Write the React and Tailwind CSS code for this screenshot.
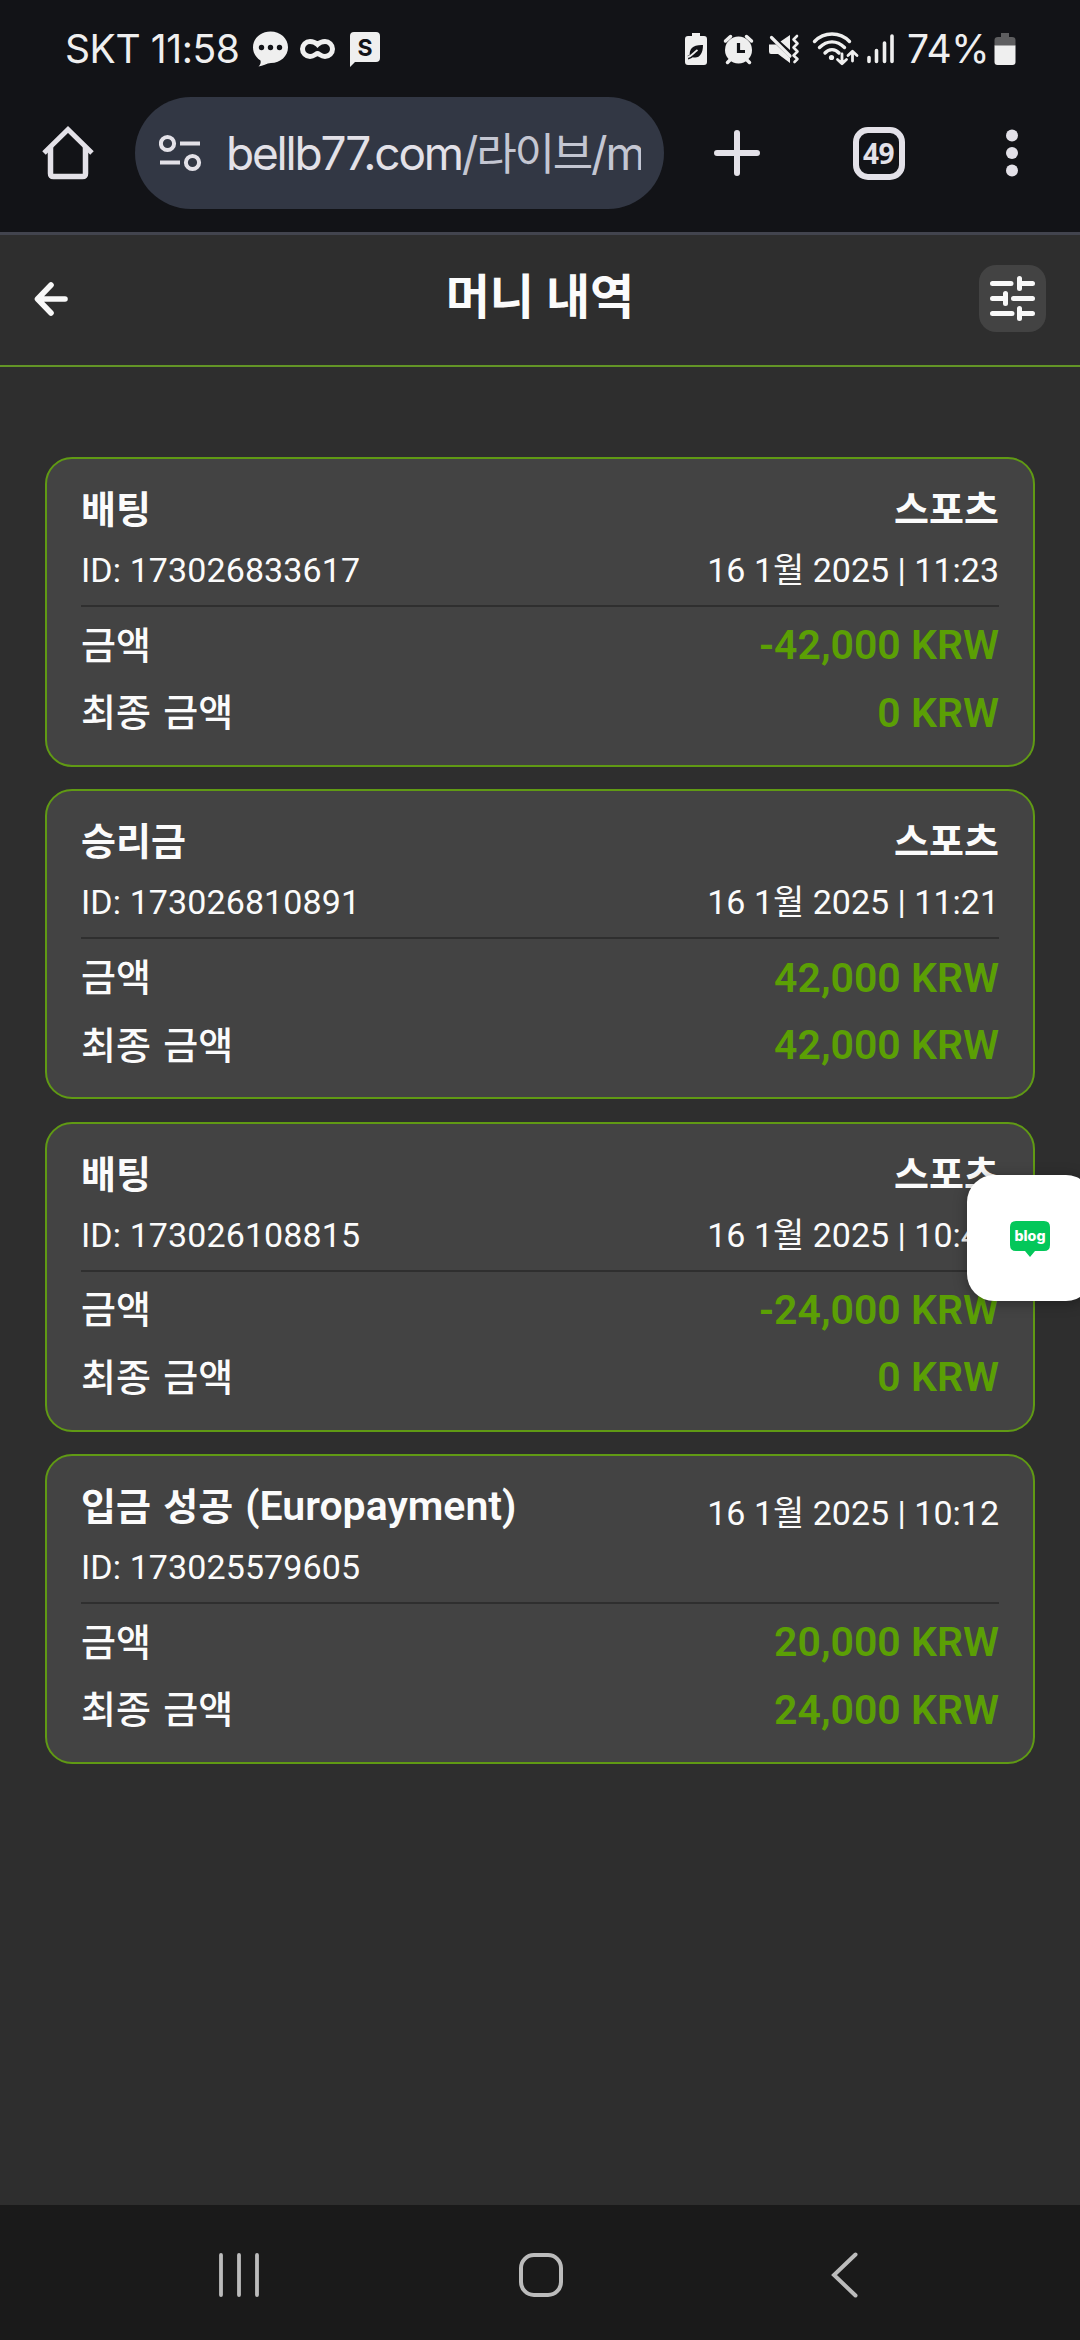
import React from "react";

const transactions = [
  { title: "배팅", category: "스포츠", id: "173026833617", time: "11:23", amount: "-42,000", total: "0" },
  { title: "승리금", category: "스포츠", id: "173026810891", time: "11:21", amount: "42,000", total: "42,000" },
  { title: "배팅", category: "스포츠", id: "173026108815", time: "10:43", amount: "-24,000", total: "0" },
  { title: "입금 성공", provider: "(Europayment)", id: "173025579605", time: "10:12", amount: "20,000", total: "24,000" },
];

const StatusBar = () => (
  <div className="flex h-[97px] items-center justify-between pt-[1px] pl-[65px] pr-[64px] text-[#efefef]">
    <div className="flex items-center">
      <span className="w-[188px] whitespace-nowrap text-[39px] leading-[44px] tracking-[-0.4px]">SKT 11:58</span>
      <svg width="128" height="36" viewBox="0 0 128 36" fill="#efefef">
        <path d="M17.500 0.500C27.500 0.500 35 7.500 35 16.200S27.500 32 18 32C13.500 32.200 10 35 5.500 35.500C7.500 33.500 8 31.500 7.500 29.500C3 26.500 0 22 0 16.200C0 7.500 7.500 0.500 17.500 0.500Z" />
        <circle cx="8.500" cy="16.500" r="2.700" fill="#121317" />
        <circle cx="17.500" cy="16.500" r="2.700" fill="#121317" />
        <circle cx="26.500" cy="16.500" r="2.700" fill="#121317" />
        <path d="M64.500 13.500C62 11.200 59.500 10.500 57 10.500a7.500 7.500 0 0 0 0 15C61 25.500 63 22.500 64.500 22.500S68 25.500 72 25.500a7.500 7.500 0 0 0 0-15C69.500 10.500 67 11.200 64.500 13.500Z" fill="none" stroke="#efefef" strokeWidth="5" />
        <path d="M101 1H123a4 4 0 0 1 4 4V27a4 4 0 0 1-4 4H102L97 36V5a4 4 0 0 1 4-4Z" />
        <text x="112" y="24.500" textAnchor="middle" fontSize="23" fontWeight="700" fontFamily="Inter, sans-serif" fill="#121317">S</text>
      </svg>
    </div>
    <div className="flex items-center">
      <svg width="210" height="36" viewBox="685 31 210 36" fill="none" stroke="#efefef">
        {/* battery saver */}
        <path d="M692 33H700V36H704Q707 36 707 39V62Q707 65 704 65H688Q685 65 685 62V39Q685 36 688 36H692Z" fill="#efefef" stroke="none" />
        <path d="M690 56.500C688.500 49 693 44.500 703 45C703 54 699 59.500 692 57Z" fill="#121317" stroke="none" />
        <path d="M688 57.500C692 57 693.500 53 698 50.500" stroke="#121317" strokeWidth="4" />
        <path d="M688 57C692 56 693.500 52.500 697.500 50" strokeWidth="2" />
        {/* alarm */}
        <circle cx="738.500" cy="50" r="13.500" fill="#efefef" stroke="none" />
        <path d="M725.500 41L730.500 36.500M751.500 41L746.500 36.500M727.500 62.500L731 59M749.500 62.500L746 59" strokeWidth="3.500" strokeLinecap="round" />
        <path d="M738.500 43V51.500H745" stroke="#121317" strokeWidth="3.200" />
        {/* muted speaker */}
        <path d="M769 44.500H776L790 58V63L778 54H771Q769 54 769 51.500ZM790 35V50L780.500 41.500Z" fill="#efefef" stroke="none" />
        <path d="M771.500 37.500L790 56" strokeWidth="3.200" strokeLinecap="round" />
        <path d="M797 36L793.500 39.500L797.500 43.500L793.500 47.500L797.500 51.500L793.500 55.500L797.500 59L794.500 62" strokeWidth="2.600" strokeLinecap="round" strokeLinejoin="round" />
        {/* wifi */}
        <path d="M814.500 41.500C824 31.500 840 31.500 849.500 41.500M819.500 47.500C827 40 837 40 844.500 47.500M825 53C829 48.500 835 48.500 839 53" strokeWidth="3.400" strokeLinecap="round" />
        <circle cx="831.500" cy="57.500" r="2.600" fill="#efefef" stroke="none" />
        <path d="M842 54V63.500M837.500 59.500L842 63.800L846.500 59.500M852.500 61V51.500M848 55.500L852.500 51.200L857 55.500" strokeWidth="2.800" strokeLinecap="round" strokeLinejoin="round" />
        {/* signal */}
        <path d="M869 57.500V61.500M876.500 50.500V61.500M884.500 43V61.500M892 36V61.500" strokeWidth="3.600" strokeLinecap="round" />
      </svg>
      <span className="ml-[12px] w-[87px] whitespace-nowrap text-[39px] leading-[44px] tracking-[-0.4px]">74%</span>
      <svg width="22" height="36" viewBox="0 0 22 36">
        <path d="M7 2H15V6H18Q21.500 6 21.500 9V15H0.500V9Q0.500 6 4 6H7Z" fill="#5e5e60" />
        <path d="M0.500 14.500H21.500V31Q21.500 34 18.500 34H3.500Q0.500 34 0.500 31Z" fill="#efefef" />
      </svg>
    </div>
  </div>
);

const BrowserBar = () => (
  <div className="flex h-[138px] items-start border-b-[3px] border-[#42444e]">
    <div className="flex h-28 w-[135px] items-center pl-[42px]">
      <svg width="52" height="54" viewBox="0 0 52 54" fill="none" stroke="#e3e1e8" strokeWidth="5.500">
        <path d="M2 27L26 3.500L50 27" strokeWidth="5" />
        <path d="M8.500 21V47.500Q8.500 50.500 11.500 50.500H40.500Q43.500 50.500 43.500 47.500V21" />
      </svg>
    </div>
    <div className="flex h-28 w-[529px] items-center rounded-full bg-[#323744] pl-6">
      <svg width="43" height="38" viewBox="0 0 43 38" fill="none" stroke="#e3e1e8" strokeWidth="4">
        <circle cx="8.500" cy="9.500" r="6.600" />
        <path d="M21 9.500H41M1 28.500H21" />
        <circle cx="33.500" cy="28.500" r="6.600" />
      </svg>
      <div className="ml-6 flex w-[415px] overflow-hidden whitespace-nowrap text-[46px] leading-[64px] tracking-[-2.200px]">
        <span className="text-[#e3e1e8]">bellb77.com</span>
        <span className="text-[#c4c6d2]">
          /<span className="text-[44px]">라이브</span>/m
        </span>
      </div>
    </div>
    <div className="flex h-28 flex-1 items-center justify-between pl-[50px] pr-[62px]">
      <svg width="46" height="46" viewBox="0 0 46 46" stroke="#e3e1e8" strokeWidth="6" strokeLinecap="round">
        <path d="M23 3V43M3 23H43" />
      </svg>
      <div className="mr-[9px] flex h-[53px] w-[52px] items-center justify-center rounded-[15px] border-[6px] border-[#e3e1e8] text-[28px] font-bold leading-none tracking-[-0.5px] text-[#e3e1e8]" style={{ fontFamily: "'Noto Sans', sans-serif" }}>
        49
      </div>
      <svg width="12" height="48" viewBox="0 0 12 48" fill="#e3e1e8">
        <circle cx="6" cy="6.500" r="6" />
        <circle cx="6" cy="24" r="6" />
        <circle cx="6" cy="41.500" r="6" />
      </svg>
    </div>
  </div>
);

const PageHeader = () => (
  <div className="flex h-[132px] items-center justify-between border-b-2 border-[#639526] pb-[3px] pl-[34px] pr-[34px]">
    <div className="w-[67px]">
      <svg width="34" height="34" viewBox="0 0 34 34" fill="none" stroke="#f8f8f8" strokeWidth="5.600" strokeLinecap="round" strokeLinejoin="round">
        <path d="M31 17H4M17 3L3.500 17L17 31" />
      </svg>
    </div>
    <h1 className="pb-[1px] text-[48px] font-bold leading-[60px] text-[#fbfbfb]">머니 내역</h1>
    <div className="flex h-[67px] w-[67px] items-center justify-center rounded-[17px] bg-[#434343]">
      <svg width="45" height="45" viewBox="0 0 45 45" fill="none" stroke="#f8f8f8" strokeWidth="5" strokeLinecap="round">
        <path d="M2.500 7.500H21M29.500 2.500V12.500M30 7.500H42.500M2.500 22.500H15M15.500 17.500V27.500M23.500 22.500H42.500M2.500 37.500H22M29.500 32.500V42.500M30 37.500H42.500" />
      </svg>
    </div>
  </div>
);

const AmountRow = ({ label, value }) => (
  <div className="flex h-[67.500px] items-center justify-between">
    <span className="text-[38px] font-medium leading-none text-[#fbfbfb] [word-spacing:3px]">{label}</span>
    <span className="text-[41px] font-semibold leading-none text-[#5b9f05]">{value} KRW</span>
  </div>
);

const TransactionCard = ({ item }) => (
  <div className="h-[310px] rounded-[27px] border-2 border-[#609a14] bg-[#434343] px-[34px] text-[#fbfbfb]">
    <div className="flex h-[148px] justify-between border-b-2 border-[#2f2f2f]">
      <div className="pt-6">
        <div className="flex h-[54px] items-center whitespace-nowrap text-[38px] font-bold leading-none [word-spacing:3px]">
          {item.title}
          {item.provider && <span className="ml-[12px] text-[41px] font-semibold">{item.provider}</span>}
        </div>
        <div className="flex h-[66px] items-center text-[34px] leading-none tracking-[0.1px]">ID: {item.id}</div>
      </div>
      <div className="flex flex-col items-end pt-6">
        {item.category && <div className="flex h-[54px] items-center text-[38px] font-bold leading-none">{item.category}</div>}
        <div className="flex h-[66px] items-center whitespace-nowrap text-[34px] leading-none">
          16 1월 2025 | {item.time}
        </div>
      </div>
    </div>
    <div className="pt-[5px]">
      <AmountRow label="금액" value={item.amount} />
      <AmountRow label="최종 금액" value={item.total} />
    </div>
  </div>
);

const BlogButton = () => (
  <div className="absolute left-[967px] top-[1175px] flex h-[126px] w-[126px] items-center rounded-[27px] bg-white pt-[2px] pl-[43px] shadow-[0_2px_14px_rgba(0,0,0,0.35)]">
    <svg width="40" height="36" viewBox="0 0 40 36">
      <path d="M6 0H34Q40 0 40 6V24Q40 30 34 30H25L20 36L15 30H6Q0 30 0 24V6Q0 0 6 0Z" fill="#03c75a" />
      <text x="20" y="20" textAnchor="middle" fontSize="14" fontWeight="800" fontFamily="Inter, sans-serif" textLength="31" lengthAdjust="spacingAndGlyphs" fill="#fff">blog</text>
    </svg>
  </div>
);

const NavBar = () => (
  <div className="flex h-[135px] items-center justify-between bg-[#1a1a1a] pt-1 pl-[218px] pr-[222px]">
    <svg width="42" height="46" viewBox="0 0 42 46" stroke="#bcbcbc" strokeWidth="3.800" strokeLinecap="round">
      <path d="M3 3V43M21 3V43M39 3V43" />
    </svg>
    <svg className="mr-[9px]" width="44" height="44" viewBox="0 0 44 44" fill="none" stroke="#bcbcbc" strokeWidth="4">
      <rect x="2" y="2" width="40" height="40" rx="13" />
    </svg>
    <svg width="27" height="46" viewBox="0 0 27 46" fill="none" stroke="#bcbcbc" strokeWidth="4" strokeLinecap="round">
      <path d="M24.500 2.500L3 23L24.500 43.500" />
    </svg>
  </div>
);

const App = () => (
  <div className="relative flex h-[2340px] w-[1080px] flex-col overflow-hidden bg-[#2e2e2e]" style={{ fontFamily: "Roboto, 'Noto Sans CJK KR', sans-serif" }}>
    <div className="bg-[#121317]" style={{ fontFamily: "Inter, 'Noto Sans CJK KR', sans-serif" }}>
      <StatusBar />
      <BrowserBar />
    </div>
    <PageHeader />
    <main className="flex flex-1 flex-col gap-[22.300px] px-[45px] pt-[90px]">
      {transactions.map((item) => (
        <TransactionCard key={item.id} item={item} />
      ))}
    </main>
    <NavBar />
    <BlogButton />
  </div>
);

export default App;
